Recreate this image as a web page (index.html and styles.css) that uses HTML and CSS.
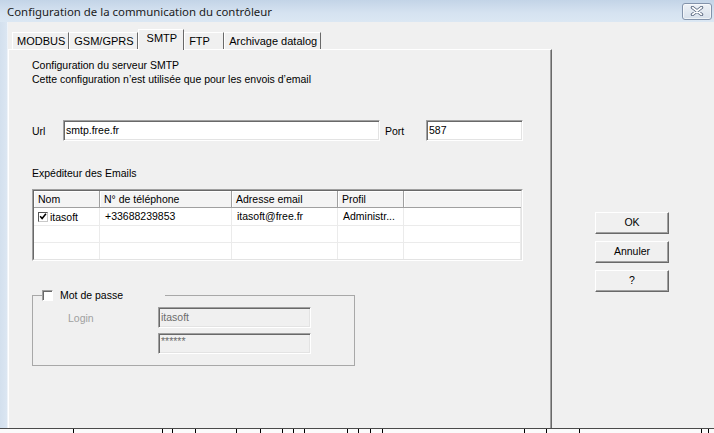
FILE: index.html
```html
<!DOCTYPE html>
<html lang="fr">
<head>
<meta charset="utf-8">
<title>Configuration de la communication du contrôleur</title>
<link rel="stylesheet" href="styles.css">
</head>
<body>
<div class="window">
  <div class="titlebar">
    <span class="title">Configuration de la communication du contrôleur</span>
    <span class="close" aria-label="Fermer">
      <svg width="14" height="10" viewBox="0 0 14 10">
        <path d="M2.5 1.5 L11.5 8.5 M11.5 1.5 L2.5 8.5" stroke="#56657d" stroke-width="3.4" stroke-linecap="round" fill="none"/>
        <path d="M2.5 1.5 L11.5 8.5 M11.5 1.5 L2.5 8.5" stroke="#ffffff" stroke-width="1.6" stroke-linecap="round" fill="none"/>
      </svg>
    </span>
  </div>

  <div class="main">
    <div class="frame"></div>
    <div class="client">
      <div class="tabctl">
        <div class="tabs">
          <span class="tab">MODBUS</span>
          <span class="tab">GSM/GPRS</span>
          <span class="tab active">SMTP</span>
          <span class="tab">FTP</span>
          <span class="tab">Archivage datalog</span>
        </div>
        <div class="panel">
          <p class="line">Configuration du serveur SMTP</p>
          <p class="line">Cette configuration n’est utilisée que pour les envois d’email</p>

          <div class="url-row">
            <span class="lbl-url">Url</span>
            <span class="input input-url">smtp.free.fr</span>
            <span class="lbl-port">Port</span>
            <span class="input input-port">587</span>
          </div>

          <p class="line section">Expéditeur des Emails</p>

          <div class="list">
            <div class="list-inner">
              <div class="grid">
                <span class="hcell">Nom</span>
                <span class="hcell">N° de téléphone</span>
                <span class="hcell">Adresse email</span>
                <span class="hcell">Profil</span>
                <span class="hcell hlast"></span>

                <span class="cell cell-name">
                  <span class="row-check">
                    <svg width="9" height="9" viewBox="0 0 9 9"><path d="M1.3 4.2 L3.5 6.7 L7.8 1.4" stroke="#000" stroke-width="1.7" fill="none"/></svg>
                  </span>itasoft</span>
                <span class="cell">+33688239853</span>
                <span class="cell">itasoft@free.fr</span>
                <span class="cell">Administr...</span>
                <span class="cell"></span>

                <span class="cell"></span><span class="cell"></span><span class="cell"></span><span class="cell"></span><span class="cell"></span>
                <span class="cell"></span><span class="cell"></span><span class="cell"></span><span class="cell"></span><span class="cell"></span>
              </div>
            </div>
          </div>

          <fieldset class="group">
            <legend class="group-legend"><span class="group-title"><span class="check"></span>Mot de passe</span></legend>
            <div class="group-body">
              <span class="lbl-login">Login</span>
              <span class="input disabled">itasoft</span>
              <span></span>
              <span class="input disabled pwd">******</span>
            </div>
          </fieldset>
        </div>
      </div>

      <div class="actions">
        <span class="btn">OK</span>
        <span class="btn">Annuler</span>
        <span class="btn">?</span>
      </div>
    </div>
  </div>

  <div class="behind">
    <span></span><span></span><span></span><span></span><span></span><span></span><span></span><span></span><span></span><span></span>
    <span></span><span></span><span></span><span></span><span></span><span></span><span></span><span></span><span></span>
  </div>
</div>
</body>
</html>
```

FILE: styles.css
```css
* { box-sizing: border-box; }

html, body {
  margin: 0;
  padding: 0;
}

body {
  width: 714px;
  height: 433px;
  overflow: hidden;
  background: #f0f0f0;
  color: #000;
  font-family: "Liberation Sans", Arial, sans-serif;
  font-size: 10.5px;
}

.window {
  display: flex;
  flex-direction: column;
  width: 714px;
  height: 433px;
}

/* caption bar */
.titlebar {
  flex: none;
  height: 22px;
  display: flex;
  align-items: center;
  justify-content: space-between;
  padding: 0 2px 0 7px;
  background: linear-gradient(#c3d4e7, #d6e3f1 60%, #dbe7f3);
}

.title {
  font-family: "Noto Sans", "Open Sans", sans-serif;
  font-size: 11.4px;
  color: #1b1b1b;
}

.close {
  display: flex;
  align-items: center;
  justify-content: center;
  width: 30px;
  height: 17px;
  border: 1px solid #8393ab;
  border-radius: 3px;
  background: linear-gradient(#eef2f7, #d7e0eb);
  box-shadow: inset 0 0 0 1px rgba(255,255,255,0.6);
}

.main {
  flex: 1;
  display: flex;
  min-height: 0;
}

.frame {
  flex: none;
  width: 8px;
  background: linear-gradient(to right, #d3e0ee, #dbe6f2);
  border-right: 1px solid #eef3f9;
}

.client {
  flex: 1;
  display: flex;
}

/* tab control */
.tabctl {
  flex: none;
  width: 544px;
  display: flex;
  flex-direction: column;
}

.tabs {
  flex: none;
  height: 27px;
  display: flex;
  align-items: flex-end;
  padding-left: 4px;
  position: relative;
  z-index: 1;
}

.tab {
  height: 17px;
  min-width: 40px;
  padding: 0 3px 0 4px;
  font-size: 11px;
  line-height: 16px;
  white-space: nowrap;
  background: #f0f0f0;
  border-top: 1px solid #fff;
  border-left: 1px solid #fff;
  border-right: 1px solid #696969;
}

.tab.active {
  height: 21px;
  margin-bottom: -1px;
  padding: 0 6px 0 8px;
}

.panel {
  flex: 1;
  border-top: 1px solid #fff;
  border-left: 1px solid #fff;
  border-right: 1px solid #696969;
  box-shadow: inset -1px 0 #a0a0a0;
  padding: 8px 0 0 23px;
}

.line {
  margin: 0;
  line-height: 14px;
}

.section {
  margin-top: 25px;
}

/* sunken edit fields */
.input {
  display: block;
  height: 21px;
  padding: 0 2px;
  line-height: 19px;
  background: #fff;
  border: 1px solid;
  border-color: #a0a0a0 #fff #fff #a0a0a0;
  box-shadow: inset 1px 1px #696969, inset -1px -1px #e3e3e3;
  white-space: nowrap;
  overflow: hidden;
}

.input.disabled {
  background: #f0f0f0;
  color: #6d6d6d;
}

.input.pwd {
  line-height: 15px;
}

.url-row {
  display: flex;
  align-items: center;
  margin-top: 34px;
}

.lbl-url { width: 31px; }
.input-url { width: 317px; }
.lbl-port { width: 41px; margin-left: 5px; }
.input-port { width: 97px; }

/* list view */
.list {
  margin-top: 9px;
  width: 491px;
  height: 72px;
  border: 1px solid;
  border-color: #a0a0a0 #fff #fff #a0a0a0;
}

.list-inner {
  height: 100%;
  background: #fff;
  border: 1px solid;
  border-color: #696969 #e3e3e3 #e3e3e3 #696969;
  overflow: hidden;
}

.grid {
  display: grid;
  grid-template-columns: 66px 132px 106px 66px 1fr;
  grid-auto-rows: 17px;
  grid-template-rows: 17px 18px;
}

.hcell {
  padding-left: 4px;
  line-height: 16px;
  background: #f4f4f4;
  border-right: 1px solid #a0a0a0;
  border-bottom: 1px solid #a0a0a0;
  box-shadow: inset 1px 1px #fff;
  white-space: nowrap;
}

.hlast {
  border-right: none;
}

.cell {
  padding-left: 5px;
  line-height: 16px;
  border-right: 1px solid #ebebeb;
  border-bottom: 1px solid #ebebeb;
  white-space: nowrap;
}

.cell-name {
  display: flex;
  align-items: center;
  gap: 2px;
  padding-left: 4px;
}

.row-check {
  display: flex;
  align-items: center;
  justify-content: center;
  width: 10px;
  height: 10px;
  background: #fff;
  border: 1px solid;
  border-color: #555 #c8c8c8 #c8c8c8 #555;
}

/* password group */
.group {
  margin: 28px 0 0;
  padding: 0;
  width: 323px;
  min-width: 0;
  border: 1px solid #a8a8a8;
}

.group-legend {
  margin-left: 9px;
  padding: 0;
}

.group-title {
  display: flex;
  align-items: center;
  gap: 7px;
  width: 123px;
  height: 12px;
  line-height: 12px;
}

.check {
  flex: none;
  width: 11px;
  height: 11px;
  background: #fff;
  border: 1px solid;
  border-color: #a0a0a0 #fff #fff #a0a0a0;
  box-shadow: inset 1px 1px #696969;
}

.group-body {
  display: grid;
  grid-template-columns: 90px 153px;
  row-gap: 5px;
  align-items: center;
  padding: 6px 0 11px 35px;
}

.lbl-login {
  color: #a0a0a0;
}

/* dialog buttons */
.actions {
  display: flex;
  flex-direction: column;
  gap: 7px;
  margin-left: 43px;
  padding-top: 190px;
}

.btn {
  width: 74px;
  height: 22px;
  line-height: 19px;
  text-align: center;
  background: #f0f0f0;
  border: 1px solid;
  border-color: #fff #696969 #696969 #fff;
  box-shadow: inset -1px -1px #a0a0a0;
}

/* strip of the window lying behind */
.behind {
  flex: none;
  height: 5px;
  display: grid;
  grid-template-columns: 73px 89px 10px 23px 41px 24px 22px 11px 11px 43px 11px 12px 12px 142px 22px 33px 122px 7px 1fr;
  border-top: 1px solid #4a4a4a;
  background: #fbfbfb;
}

.behind span + span {
  border-left: 1px solid #000;
}
```
